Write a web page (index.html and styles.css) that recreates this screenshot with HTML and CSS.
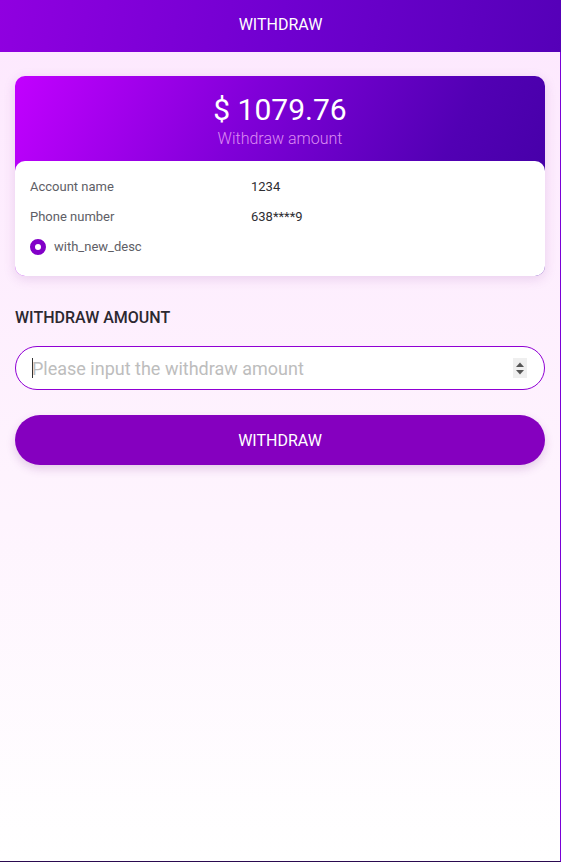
FILE: index.html
```html
<!DOCTYPE html>
<html>
<head>
<meta charset="utf-8">
<link rel="stylesheet" href="styles.css">
</head>
<body>
<div class="page">
  <header class="topbar">WITHDRAW</header>
  <main class="content">
    <section class="card">
      <div class="card-hero">
        <div class="amount">$ 1079.76</div>
        <div class="amount-label">Withdraw amount</div>
      </div>
      <div class="card-body">
        <div class="row"><span class="label">Account name</span><span class="value">1234</span></div>
        <div class="row"><span class="label">Phone number</span><span class="value">638****9</span></div>
        <div class="row radio-row"><span class="radio"></span><span class="label">with_new_desc</span></div>
      </div>
    </section>
    <h2 class="section-title">WITHDRAW AMOUNT</h2>
    <div class="input-wrap">
      <span class="caret"></span>
      <input class="amount-input" type="text" placeholder="Please input the withdraw amount">
      <span class="spinner">
        <svg width="14" height="20" viewBox="0 0 14 20"><rect width="14" height="20" fill="#efefef"/><path d="M3 9 L7 4.5 L11 9 Z" fill="#555"/><path d="M3 12 L7 16.5 L11 12 Z" fill="#555"/></svg>
      </span>
    </div>
    <button class="submit">WITHDRAW</button>
  </main>
</div>
</body>
</html>
```
FILE: styles.css
```css
* { box-sizing: border-box; }
html, body { margin: 0; padding: 0; }
body {
  font-family: Roboto, "Noto Sans", sans-serif;
  width: 561px;
  height: 862px;
  overflow: hidden;
}
.page {
  width: 561px;
  height: 862px;
  display: flex;
  flex-direction: column;
  background: linear-gradient(180deg, #fde8fe 0%, #fef4fe 60%, #ffffff 100%);
  border-right: 1px solid #7a00d8;
  border-bottom: 1px solid #2a0a50;
}
.topbar {
  height: 52px;
  flex: none;
  display: flex;
  align-items: center;
  justify-content: center;
  padding-bottom: 4px;
  color: #fff;
  font-size: 16px;
  font-weight: 400;
  margin-right: -1px;
  background: linear-gradient(100deg, #9000e0 0%, #7000d0 50%, #5500b8 100%);
}
.content {
  padding: 24px 15px 0 15px;
  display: flex;
  flex-direction: column;
}
.card {
  border-radius: 10px;
  overflow: hidden;
  background: linear-gradient(115deg, #c200ff 0%, #8000d8 40%, #5200b4 75%, #4200a4 100%);
  box-shadow: 0 3px 12px rgba(140, 60, 160, 0.18);
}
.card-hero {
  height: 85px;
  display: flex;
  flex-direction: column;
  align-items: center;
  padding-top: 16px;
}
.amount {
  color: #fff;
  font-size: 30px;
  line-height: 36px;
}
.amount-label {
  color: #dc8cf2;
  font-size: 16px;
  line-height: 22px;
  font-weight: 300;
}
.card-body {
  background: #fff;
  border-radius: 10px 10px 0 0;
  padding: 18px 15px 21px 15px;
  display: flex;
  flex-direction: column;
  gap: 14px;
}
.row {
  display: grid;
  grid-template-columns: 221px 1fr;
  font-size: 13px;
  line-height: 16px;
}
.label { color: #5e5e66; }
.value { color: #2e2e33; }
.radio-row {
  display: flex;
  align-items: center;
  gap: 8px;
}
.radio {
  width: 16px;
  height: 16px;
  border-radius: 50%;
  border: 5px solid #8200c8;
  background: #fff;
  flex: none;
}
.section-title {
  margin: 33px 0 0 0;
  font-size: 16px;
  line-height: 18px;
  font-weight: 500;
  color: #2c2830;
}
.input-wrap {
  margin-top: 19px;
  height: 44px;
  border: 1px solid #9000d4;
  border-radius: 22px;
  background: #fff;
  display: flex;
  align-items: center;
  padding: 0 17px 0 16px;
  position: relative;
}
.caret {
  width: 1px;
  height: 20px;
  background: #333;
  position: absolute;
  left: 16px;
  top: 11px;
}
.amount-input {
  flex: 1;
  border: none;
  outline: none;
  background: transparent;
  font-family: Roboto, sans-serif;
  font-size: 18px;
  color: #333;
  padding: 0;
}
.amount-input::placeholder { color: #bdbdbd; }
.spinner { display: flex; }
.submit {
  margin-top: 25px;
  height: 50px;
  border: none;
  border-radius: 25px;
  background: #8500bf;
  color: #fff;
  font-family: Roboto, sans-serif;
  font-size: 16px;
  font-weight: 400;
  box-shadow: 0 4px 10px rgba(120, 40, 140, 0.2);
}
```
